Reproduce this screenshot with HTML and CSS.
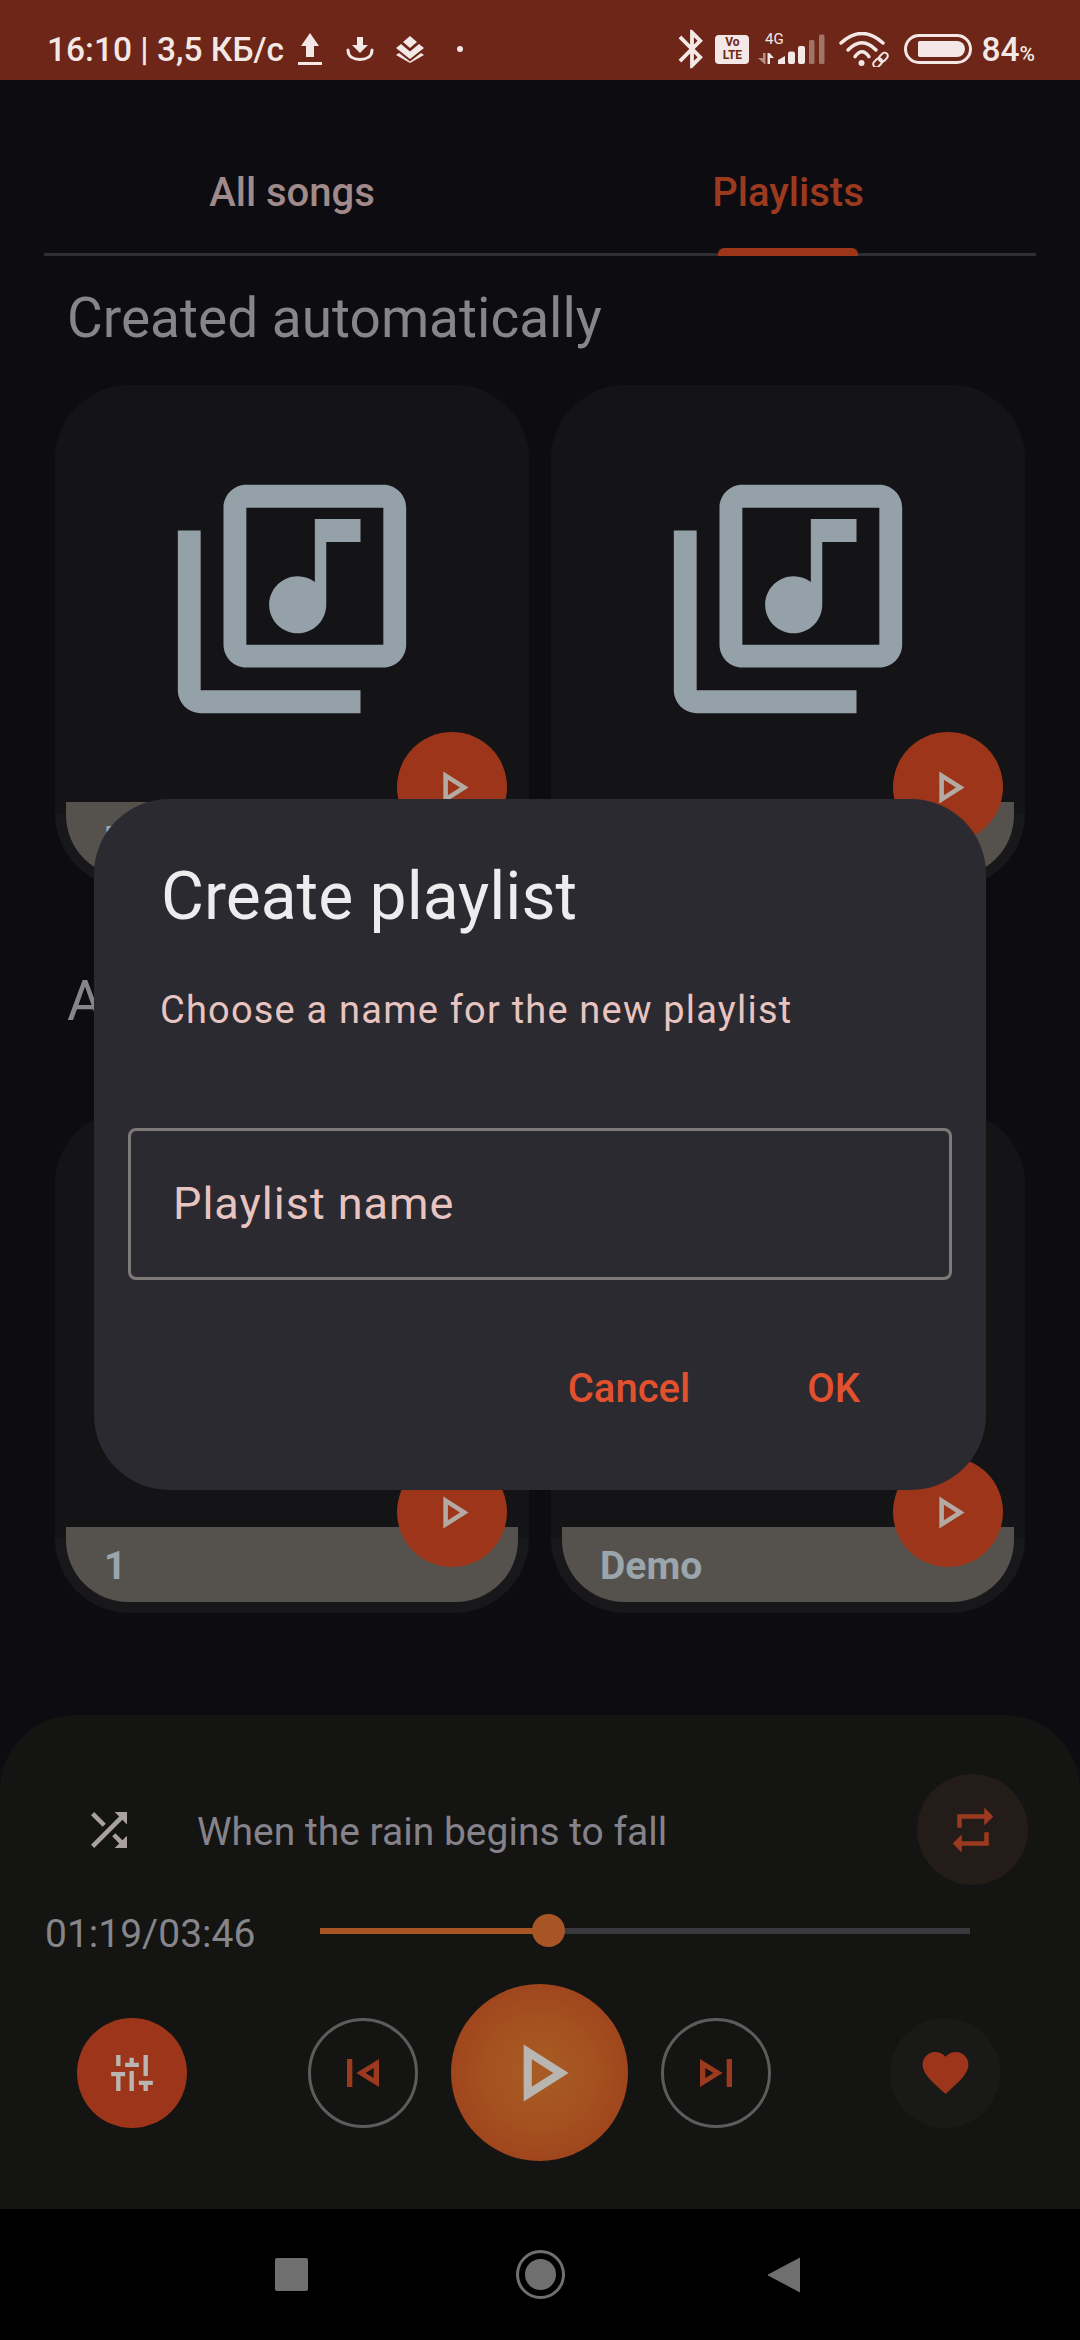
FILE: index.html
```html
<!DOCTYPE html>
<html>
<head>
	<title>Playlists</title>
	<link rel="stylesheet" href="styles.css">
</head>
<body>
	<div class="statusbar">
		<span class="status-text">16:10 | 3,5 КБ/с</span>
		<svg class="st-upload" viewBox="0 0 24 32"><path d="M12 0 21 13H16V24H8V13H3Z M0 29H24V32H0Z" fill="#f3e8e5"/></svg>
		<svg class="st-download" viewBox="0 0 28 24"><path d="M11 0H17V8H22L14 16 6 8H11Z" fill="#f3e8e5"/><path d="M2 13C2 20 8 22.500 14 22.500S26 20 26 13" fill="none" stroke="#f3e8e5" stroke-width="3" stroke-linecap="round"/></svg>
		<svg class="st-layers" viewBox="0 0 28 27"><path d="M14 0 21 6 14 12 7 6Z M5 8 14 15.500 23 8 28 12 14 23 0 12Z M3 17 14 25.500 25 17 28 19 14 27 0 19Z" fill="#f3e8e5"/></svg>
		<span class="st-dot"></span>

		<svg class="st-bt" viewBox="0 0 24 24"><path d="M17.710 7.710 12 2h-1v7.590L6.410 5 5 6.410 10.590 12 5 17.590 6.410 19 11 14.410V22h1l5.710-5.710-4.300-4.290 4.300-4.290zM13 5.830l1.880 1.880L13 9.590V5.830zm1.880 10.460L13 18.170v-3.760l1.880 1.880z" fill="#f3e8e5"/></svg>
		<span class="st-volte">Vo<br>LTE</span>
		<svg class="st-signal" viewBox="0 -4 67 40">
			<text x="7" y="11" class="st-4g">4G</text>
			<g fill="#f3e8e5">
				<path d="M5 20H7.500V31H6.500L0 25H5Z" opacity=".55"/>
				<path d="M9.500 20H11.500L16 25H12V31H9.500Z"/>
				<path d="M20 27 27 23V31H20Z"/>
				<rect x="30" y="18.500" width="7" height="12.500" rx="2"/>
				<rect x="40" y="13" width="7" height="18" rx="2"/>
				<rect x="51" y="7" width="5.500" height="24" rx="1.500" opacity=".4"/>
				<rect x="61" y="1.500" width="5.500" height="29.500" rx="1.500" opacity=".4"/>
			</g>
		</svg>
		<svg class="st-wifi" viewBox="0 0 50 35">
			<g fill="none" stroke="#f3e8e5" stroke-width="3.500" stroke-linecap="round">
				<path d="M2 11Q23 -8 44 11"/>
				<path d="M9 18Q23 3.500 37 18"/>
				<path d="M16 24.700Q23 15 30 24.700"/>
			</g>
			<circle cx="22.500" cy="31" r="3" fill="#f3e8e5"/>
			<g fill="none" stroke="#f3e8e5" stroke-width="2" transform="translate(41.500 28) rotate(-45)">
				<rect x="-9" y="-3.200" width="10" height="6.400" rx="3.200"/>
				<rect x="-1" y="-3.200" width="10" height="6.400" rx="3.200"/>
			</g>
		</svg>
		<span class="st-battery"><span class="st-battery-fill"></span></span>
		<span class="status-text st-level">84<small>%</small></span>
	</div>

	<div class="tabs">
		<div class="tab">All songs</div>
		<div class="tab tab-active">Playlists</div>
	</div>

	<div class="heading">Created automatically</div>
	<div class="grid">
		<div class="card">
			<svg class="card-icon" viewBox="0 0 24 24"><path d="M20 2H8c-1.100 0-2 .9-2 2v12c0 1.100.9 2 2 2h12c1.100 0 2-.9 2-2V4c0-1.100-.9-2-2-2zm0 14H8V4h12v12zm-7.500-1c1.380 0 2.500-1.120 2.500-2.500V7h3V5h-4v5.510c-.42-.32-.93-.51-1.500-.51-1.380 0-2.500 1.120-2.500 2.500s1.120 2.500 2.500 2.500zM4 6H2v14c0 1.100.9 2 2 2h14v-2H4V6z"/></svg>
			<div class="card-play"><svg viewBox="0 0 24 24"><path d="M10 8.640 15.270 12 10 15.360V8.640M8 5v14l11-7L8 5z"/></svg></div>
			<div class="card-label">L</div>
		</div>
		<div class="card">
			<svg class="card-icon" viewBox="0 0 24 24"><path d="M20 2H8c-1.100 0-2 .9-2 2v12c0 1.100.9 2 2 2h12c1.100 0 2-.9 2-2V4c0-1.100-.9-2-2-2zm0 14H8V4h12v12zm-7.500-1c1.380 0 2.500-1.120 2.500-2.500V7h3V5h-4v5.510c-.42-.32-.93-.51-1.500-.51-1.380 0-2.500 1.120-2.500 2.500s1.120 2.500 2.500 2.500zM4 6H2v14c0 1.100.9 2 2 2h14v-2H4V6z"/></svg>
			<div class="card-play"><svg viewBox="0 0 24 24"><path d="M10 8.640 15.270 12 10 15.360V8.640M8 5v14l11-7L8 5z"/></svg></div>
			<div class="card-label"></div>
		</div>
	</div>

	<div class="heading heading-second">A</div>
	<div class="grid">
		<div class="card">
			<div class="card-play"><svg viewBox="0 0 24 24"><path d="M10 8.640 15.270 12 10 15.360V8.640M8 5v14l11-7L8 5z"/></svg></div>
			<div class="card-label">1</div>
		</div>
		<div class="card">
			<div class="card-play"><svg viewBox="0 0 24 24"><path d="M10 8.640 15.270 12 10 15.360V8.640M8 5v14l11-7L8 5z"/></svg></div>
			<div class="card-label">Demo</div>
		</div>
	</div>

	<div class="player">
		<div class="song-row">
			<svg class="shuffle" viewBox="0 0 24 24"><path d="M10.590 9.170 5.410 4 4 5.410l5.170 5.170 1.420-1.410zM14.500 4l2.040 2.040L4 18.590 5.410 20 17.960 7.460 20 9.500V4h-5.500zm.33 9.410-1.410 1.410 3.130 3.130L14.500 20H20v-5.500l-2.040 2.040-3.130-3.130z"/></svg>
			<div class="song-title">When the rain begins to fall</div>
			<div class="repeat"><svg viewBox="0 0 24 24"><path d="M7 7h10v3l4-4-4-4v3H5v6h2V7zm10 10H7v-3l-4 4 4 4v-3h12v-6h-2v4z"/></svg></div>
		</div>
		<div class="time-row">
			<div class="time">01:19/03:46</div>
			<div class="slider">
				<div class="slider-fill" style="width: 35%"><span class="slider-thumb"></span></div>
			</div>
		</div>
		<div class="controls">
			<div class="btn btn-eq">
				<svg viewBox="0 0 125 108"><path d="M15 0H28V33H15Z M0 51H42V64H0Z M15 64H28V108H15Z M55 8H68V23H55Z M42 23H83V36H42Z M55 48H68V108H55Z M97 0H110V63H97Z M83 77H125V90H83Z M97 90H110V108H97Z"/></svg>
			</div>
			<div class="btn btn-ring btn-prev">
				<svg viewBox="0 0 24 24" preserveAspectRatio="none"><path d="M6 6h2v12H6zm3.500 6 8.500 6V6l-8.500 6zm6.500 2.140L12.970 12 16 9.860v4.280z"/></svg>
			</div>
			<div class="btn-play"><svg viewBox="0 0 24 24"><path d="M10 8.640 15.270 12 10 15.360V8.640M8 5v14l11-7L8 5z"/></svg></div>
			<div class="btn btn-ring btn-next">
				<svg viewBox="0 0 24 24" preserveAspectRatio="none"><path d="M6 18l8.500-6L6 6v12zm2-8.140L11.030 12 8 14.140V9.860zM16 6h2v12h-2z"/></svg>
			</div>
			<div class="btn btn-heart"><svg viewBox="0 0 24 24"><path d="M12 21.350l-1.450-1.320C5.400 15.360 2 12.280 2 8.500 2 5.420 4.420 3 7.500 3c1.740 0 3.410.81 4.500 2.090C13.090 3.810 14.760 3 16.500 3 19.580 3 22 5.420 22 8.500c0 3.780-3.400 6.860-8.550 11.540L12 21.350z"/></svg></div>
		</div>
	</div>

	<div class="navbar">
		<span class="nav-square"></span>
		<span class="nav-circle"><span></span></span>
		<svg class="nav-back" viewBox="0 0 32 36"><path d="M32 1V35L0 18Z" fill="#6f6f6f" stroke="#6f6f6f" stroke-linejoin="round"/></svg>
	</div>

	<div class="dialog">
		<div class="dialog-title">Create playlist</div>
		<div class="dialog-text">Choose a name for the new playlist</div>
		<div class="dialog-input">Playlist name</div>
		<div class="dialog-actions">
			<span>Cancel</span>
			<span>OK</span>
		</div>
	</div>
</body>
</html>
```

FILE: styles.css
```css
* {
	box-sizing: border-box;
}

body {
	margin: 0;
	width: 1080px;
	height: 2340px;
	overflow: hidden;
	position: relative;
	display: flex;
	flex-direction: column;
	background: #0d0c11;
	font-family: Roboto, "Noto Sans", sans-serif;
}

/* status bar */
.statusbar {
	height: 80px;
	flex: none;
	display: flex;
	align-items: center;
	padding: 18px 0 0 47px;
	background: #6d2617;
}

.status-text {
	font-size: 33.500px;
	font-weight: 500;
	color: #f3e8e5;
	white-space: nowrap;
}

.st-level small {
	font-size: 21px;
}

.statusbar svg {
	flex: none;
}

.st-upload {
	width: 24px;
	height: 32px;
	margin-left: 14px;
}

.st-download {
	width: 28px;
	height: 24px;
	margin-left: 24px;
}

.st-layers {
	width: 28px;
	height: 27px;
	margin-left: 22px;
}

.st-dot {
	width: 6px;
	height: 6px;
	margin-left: 33px;
	border-radius: 50%;
	background: #f3e8e5;
}

.st-bt {
	width: 46px;
	height: 46px;
	margin-left: auto;
}

.st-volte {
	width: 34px;
	height: 29px;
	padding-top: 1px;
	border-radius: 4px;
	background: #f3e8e5;
	color: #6d2617;
	font-size: 12px;
	line-height: 13px;
	font-weight: 700;
	text-align: center;
}

.st-signal {
	width: 67px;
	height: 40px;
	margin-left: 9px;
}

.st-4g {
	font-size: 15px;
	fill: #f3e8e5;
}

.st-wifi {
	width: 50px;
	height: 35px;
	margin-left: 14px;
}

.st-battery {
	width: 68px;
	height: 30px;
	margin-left: 15px;
	padding: 4px;
	border: 3px solid #f3e8e5;
	border-radius: 15px;
	display: flex;
	justify-content: flex-end;
}

.st-battery-fill {
	width: 47px;
	border-radius: 2px 9px 9px 2px;
	background: #f3e8e5;
}

.st-level {
	margin-left: 9px;
	margin-right: 45px;
}

/* tabs */
.tabs {
	height: 176px;
	flex: none;
	margin: 0 44px;
	display: flex;
	border-bottom: 3px solid #2f2e33;
}

.tab {
	flex: 1;
	position: relative;
	padding-top: 89px;
	text-align: center;
	font-size: 40px;
	font-weight: 500;
	line-height: 48px;
	color: #a08a8a;
}

.tab-active {
	color: #9c3a20;
}

.tab-active::after {
	content: "";
	position: absolute;
	left: 178px;
	bottom: -3px;
	width: 140px;
	height: 8px;
	border-radius: 6px 6px 0 0;
	background: #9c3519;
}

/* playlist cards */
.heading {
	flex: none;
	margin-top: 32px;
	padding-left: 67px;
	height: 60px;
	font-size: 55px;
	line-height: 60px;
	color: #85858a;
}

.heading-second {
	margin-top: 83px;
}

.grid {
	flex: none;
	margin-top: 37px;
	padding: 0 55px;
	display: grid;
	grid-template-columns: 474px 474px;
	gap: 22px;
}

.heading-second + .grid {
	margin-top: 79px;
}

.card {
	height: 503px;
	position: relative;
	display: flex;
	flex-direction: column;
	padding: 0 11px 11px;
	border-radius: 75px;
	background: linear-gradient(#141316 85%, #18171a 85%);
}

.card-icon {
	width: 274px;
	height: 274px;
	margin: 77px 0 0 89px;
	fill: #95a1a8;
	flex: none;
}

.card-play {
	position: absolute;
	right: 22px;
	top: 347px;
	z-index: 1;
	width: 110px;
	height: 110px;
	border-radius: 50%;
	background: #9c3519;
	display: flex;
	align-items: center;
	justify-content: center;
}

.card-play svg {
	width: 55px;
	height: 55px;
	fill: #b4aaa4;
}

.card-label {
	height: 75px;
	margin-top: auto;
	padding-left: 38px;
	border-radius: 0 0 62px 62px;
	background: #55524e;
	font-size: 39px;
	font-weight: 700;
	line-height: 79px;
	color: #9aa5ac;
}

/* player */
.player {
	margin-top: auto;
	height: 494px;
	flex: none;
	padding-top: 59px;
	border-radius: 75px 75px 0 0;
	background: #141412;
}

.song-row {
	display: flex;
	align-items: center;
	height: 111px;
	padding: 0 52px 0 82px;
}

.shuffle {
	width: 54px;
	height: 54px;
	fill: #a8a1a0;
}

.song-title {
	margin-left: 61px;
	padding-top: 4px;
	font-size: 39px;
	color: #85828a;
}

.repeat {
	margin-left: auto;
	width: 111px;
	height: 111px;
	border-radius: 50%;
	background: #231c18;
	display: flex;
	align-items: center;
	justify-content: center;
}

.repeat svg {
	width: 54px;
	height: 54px;
	fill: #9c3a20;
}

.time-row {
	display: flex;
	align-items: center;
	height: 33px;
	margin-top: 29px;
	padding-left: 45px;
}

.time {
	width: 275px;
	padding-top: 6px;
	font-size: 39px;
	color: #85858a;
}

.slider {
	width: 650px;
	height: 6px;
	background: #3a393d;
}

.slider-fill {
	height: 100%;
	position: relative;
	background: #a85525;
}

.slider-thumb {
	position: absolute;
	right: -17px;
	top: -14px;
	width: 33px;
	height: 33px;
	border-radius: 50%;
	background: #a85525;
}

.controls {
	display: flex;
	align-items: center;
	height: 177px;
	margin-top: 37px;
	padding-left: 77px;
}

.btn {
	width: 110px;
	height: 110px;
	flex: none;
	border-radius: 50%;
	display: flex;
	align-items: center;
	justify-content: center;
}

.btn-eq {
	background: #9c3519;
}

.btn-eq svg {
	width: 42px;
	height: 36px;
	fill: #b9b5b0;
}

.btn-ring {
	border: 3px solid #5d5c5c;
}

.btn-ring svg {
	width: 64px;
	height: 56px;
	fill: #9c3a20;
}

.btn-prev {
	margin-left: 121px;
}

.btn-next {
	margin-left: 33px;
}

.btn-play {
	width: 177px;
	height: 177px;
	flex: none;
	margin-left: 33px;
	border-radius: 50%;
	background: radial-gradient(circle, #a85c24 0%, #a4501f 45%, #9c3a1c 100%);
	display: flex;
	align-items: center;
	justify-content: center;
}

.btn-play svg {
	width: 98px;
	height: 98px;
	fill: #b9b5b0;
}

.btn-heart {
	margin-left: 119px;
	background: #191917;
}

.btn-heart svg {
	width: 55px;
	height: 55px;
	fill: #9c3519;
}

/* navigation bar */
.navbar {
	height: 131px;
	flex: none;
	display: flex;
	align-items: center;
	padding-left: 275px;
	background: #000;
}

.nav-square {
	width: 33px;
	height: 33px;
	border-radius: 2px;
	background: #6f6f6f;
}

.nav-circle {
	width: 49px;
	height: 49px;
	margin-left: 208px;
	padding: 6px;
	border: 3px solid #6f6f6f;
	border-radius: 50%;
	display: flex;
}

.nav-circle span {
	flex: 1;
	border-radius: 50%;
	background: #6f6f6f;
}

.nav-back {
	width: 32px;
	height: 36px;
	margin-left: 203px;
}

/* dialog */
.dialog {
	position: absolute;
	left: 94px;
	top: 799px;
	z-index: 2;
	width: 892px;
	height: 691px;
	padding: 60px 34px 0;
	border-radius: 75px;
	background: #2b2a30;
}

.dialog-title {
	padding-left: 33px;
	font-size: 66px;
	line-height: 76px;
	color: #efecf0;
}

.dialog-text {
	margin-top: 51px;
	padding-left: 32px;
	font-size: 38px;
	line-height: 48px;
	letter-spacing: 1.200px;
	color: #e8c4c0;
}

.dialog-input {
	height: 152px;
	margin-top: 94px;
	padding-left: 42px;
	border: 3px solid #7f7a7a;
	border-radius: 8px;
	font-size: 45px;
	line-height: 145px;
	letter-spacing: 1px;
	color: #e8c4c0;
}

.dialog-actions {
	margin-top: 85px;
	padding-right: 92px;
	display: flex;
	justify-content: flex-end;
	gap: 117px;
	font-size: 40px;
	font-weight: 500;
	line-height: 48px;
	color: #e2512e;
}
```
